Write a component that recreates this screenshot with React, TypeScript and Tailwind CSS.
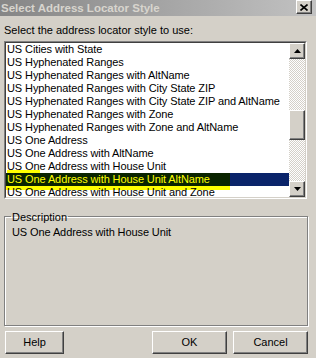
import React from "react";

const items = [
  "US Cities with State",
  "US Hyphenated Ranges",
  "US Hyphenated Ranges with AltName",
  "US Hyphenated Ranges with City State ZIP",
  "US Hyphenated Ranges with City State ZIP and AltName",
  "US Hyphenated Ranges with Zone",
  "US Hyphenated Ranges with Zone and AltName",
  "US One Address",
  "US One Address with AltName",
  "US One Address with House Unit",
  "US One Address with House Unit AltName",
  "US One Address with House Unit and Zone",
];

function Raised({ className, children }: { className?: string; children?: React.ReactNode }) {
  return (
    <div
      className={
        "border border-t-white border-l-white border-r-[#404040] border-b-[#404040] bg-[#d4d0c8] shadow-[inset_-1px_-1px_0_#808080] flex items-center justify-center " +
        (className ?? "")
      }
    >
      {children}
    </div>
  );
}

function Arrow({ down }: { down?: boolean }) {
  return (
    <svg width="7" height="4" viewBox="0 0 7 4">
      {down ? (
        <path d="M0 0H7L3.5 4Z" fill="#000" />
      ) : (
        <path d="M3.5 0L7 4H0Z" fill="#000" />
      )}
    </svg>
  );
}

export default function App() {
  return (
    <div className="w-[316px] h-[358px] overflow-hidden bg-[#d4d0c8] font-['Liberation_Sans',Arial,sans-serif] text-[11px] text-black">
      {/* Title bar */}
      <div className="h-[16px] flex items-start justify-between bg-gradient-to-r from-[#868686] to-[#c2c2c2] pl-[1px] pr-[4px]">
        <span className="font-bold text-[11.5px] leading-[16px] text-[#d8d5ce] whitespace-nowrap">
          Select Address Locator Style
        </span>
        <Raised className="w-[16px] h-[14px]">
          <svg width="8" height="7" viewBox="0 0 8 7">
            <path d="M0.5 0.5L7.5 6.5M7.5 0.5L0.5 6.5" stroke="#000" strokeWidth="1.6" />
          </svg>
        </Raised>
      </div>

      <div className="pl-[4px] pr-[8px]">
        <div className="mt-[8px] leading-[13px] whitespace-nowrap">
          Select the address locator style to use:
        </div>

        {/* List box */}
        <div className="mt-[4px] w-[303px] h-[158px] border border-t-[#808080] border-l-[#808080] border-r-white border-b-white">
          <div className="h-full flex border border-t-[#404040] border-l-[#404040] border-r-[#d4d0c8] border-b-[#d4d0c8] bg-white">
            <div className="flex-1 overflow-hidden tracking-[-0.1px]">
              {items.map((it, i) => {
                if (i === 10) {
                  return (
                    <div key={it} className="relative h-[13px] leading-[13px] pl-[1px] whitespace-nowrap bg-[#0a246a] text-[#ffff00]">
                      <div className="absolute left-0 top-0 w-[224px] h-full bg-[#0a2400]" />
                      <span className="relative">{it}</span>
                    </div>
                  );
                }
                return (
                  <div key={it} className="relative h-[13px] leading-[13px] pl-[1px] whitespace-nowrap">
                    {i === 9 && <div className="absolute left-[1px] top-[10px] w-[33px] h-[3px] bg-[#ffff00]" />}
                    {i === 11 && <div className="absolute left-0 top-0 w-[224px] h-[4px] bg-[#ffff00]" />}
                    <span className="relative">{it}</span>
                  </div>
                );
              })}
            </div>
            {/* Scrollbar */}
            <div className="w-[16px] flex flex-col">
              <Raised className="h-[16px] shrink-0">
                <Arrow />
              </Raised>
              <div className="h-[51px] shrink-0 bg-[image:repeating-conic-gradient(#ffffff_0%_25%,#d4d0c8_0%_50%)] bg-[length:2px_2px]" />
              <Raised className="h-[30px] shrink-0" />
              <div className="flex-1 bg-[image:repeating-conic-gradient(#ffffff_0%_25%,#d4d0c8_0%_50%)] bg-[length:2px_2px]" />
              <Raised className="h-[16px] shrink-0">
                <Arrow down />
              </Raised>
            </div>
          </div>
        </div>

        {/* Description group */}
        <fieldset className="mt-[9px] w-[304px] h-[118px] border border-[#808080] shadow-[inset_1px_1px_0_#ffffff,1px_1px_0_#ffffff] pl-[6px]">
          <legend className="pt-[3px] px-[1px] leading-[13px]">Description</legend>
          <div className="mt-[2px] pl-[1px] leading-[13px] whitespace-nowrap tracking-[-0.1px]">US One Address with House Unit</div>
        </fieldset>

        {/* Buttons */}
        <div className="mt-[5px] flex pl-[1px]">
          <Raised className="w-[59px] h-[23px]">Help</Raised>
          <Raised className="ml-[88px] w-[75px] h-[23px]">OK</Raised>
          <Raised className="ml-[6px] w-[75px] h-[23px]">Cancel</Raised>
        </div>
      </div>
    </div>
  );
}
